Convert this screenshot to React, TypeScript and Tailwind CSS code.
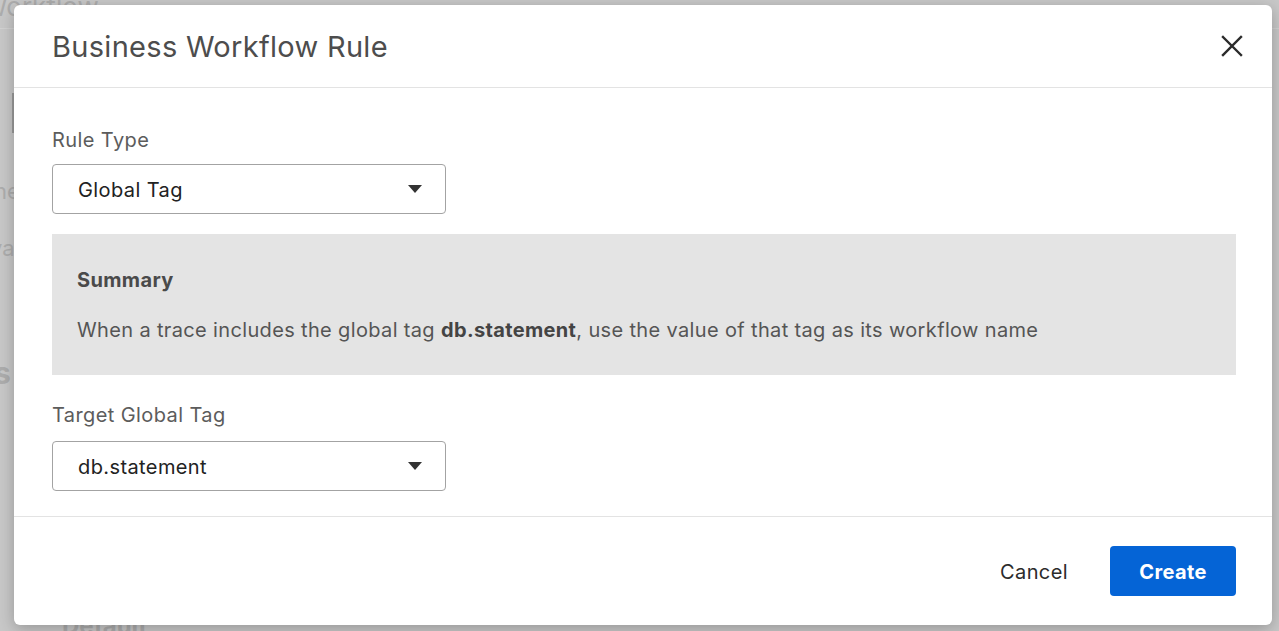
import React from 'react';

// 背景ページ（オーバーレイの下にうっすら見える部分）
function Backdrop() {
  return (
    <div className="h-full w-full bg-[#c8c8c8] text-[#adadad]">
      <div className="h-[29px] border-b border-[#d2d2d2] pl-0 pt-0 text-[26px] leading-[14px]">
        <span className="-ml-[18px]">Workflow</span>
      </div>
      <div className="ml-[12px] mt-[64px] h-[40px] w-[2px] bg-[#9a9a9a]" />
      <div className="mt-[42px] -ml-[6px] text-[22px]">ne</div>
      <div className="mt-[24px] -ml-[10px] text-[22px]">var</div>
      <div className="mt-[86px] -ml-[6px] text-[30px] font-bold">s</div>
      <div className="mt-[218px] ml-[62px] text-[24px] font-bold leading-none">Default</div>
    </div>
  );
}

function Caret() {
  return (
    <svg width="14" height="8" viewBox="0 0 14 8" className="shrink-0">
      <path d="M0 0 L14 0 L7 8 Z" fill="#333333" />
    </svg>
  );
}

function CloseIcon() {
  return (
    <svg width="22" height="22" viewBox="0 0 22 22">
      <path
        d="M2 2 L20 20 M20 2 L2 20"
        stroke="#2b2b2b"
        strokeWidth="2.4"
        strokeLinecap="square"
      />
    </svg>
  );
}

function SelectBox({ value }: { value: string }) {
  return (
    <button
      type="button"
      className="flex h-[50px] w-[394px] shrink-0 items-center justify-between rounded-[4px] border border-[#a3a3a3] bg-white pl-[25px] pr-[23px] text-left text-[20px] tracking-[0.4px] text-[#222]"
    >
      <span className="pt-[1px]">{value}</span>
      <Caret />
    </button>
  );
}

export default function App() {
  return (
    <div
      className="relative h-[631px] w-[1279px] overflow-hidden"
      style={{ fontFamily: 'Inter, "Noto Sans", sans-serif' }}
    >
      <Backdrop />

      {/* モーダル本体 */}
      <div className="absolute left-[14px] top-[5px] flex h-[620px] w-[1258px] flex-col rounded-[6px] bg-white shadow-[0_4px_16px_rgba(0,0,0,0.25)]">
        <div className="flex h-[83px] shrink-0 items-center justify-between border-b border-[#e3e3e3] pl-[38px] pr-[29px]">
          <h1 className="pt-[1px] text-[29px] font-normal tracking-[0.3px] text-[#4d4d4d]">
            Business Workflow Rule
          </h1>
          <button type="button" className="flex items-center justify-center">
            <CloseIcon />
          </button>
        </div>

        <div className="flex flex-1 flex-col pl-[38px] pr-[36px] pt-[39px] tracking-[0.4px]">
          <label className="mb-[11px] text-[20px] leading-[26px] text-[#5c5c5c]">Rule Type</label>
          <SelectBox value="Global Tag" />

          <div className="mt-[20px] h-[141px] shrink-0 bg-[#e4e4e4] pl-[25px] pt-[33px] tracking-[0.35px]">
            <div className="text-[20px] font-bold leading-[26px] text-[#4a4a4a]">Summary</div>
            <p className="mt-[24px] text-[20px] leading-[26px] text-[#555555]">
              When a trace includes the global tag{' '}
              <span className="font-bold text-[#444]">db.statement</span>, use the value of that tag as its
              workflow name
            </p>
          </div>

          <label className="mb-[13px] mt-[27px] text-[20px] leading-[26px] text-[#5c5c5c]">
            Target Global Tag
          </label>
          <SelectBox value="db.statement" />
        </div>

        <div className="flex h-[109px] shrink-0 items-center justify-end gap-[17px] border-t border-[#e3e3e3] pr-[36px] tracking-[0.4px]">
          <button type="button" className="h-[50px] rounded-[4px] px-[25px] pt-[1px] text-[20px] text-[#2b2b2b]">
            Cancel
          </button>
          <button
            type="button"
            className="h-[50px] w-[126px] rounded-[4px] bg-[#0564d6] pt-[1px] text-[20px] font-bold text-white"
          >
            Create
          </button>
        </div>
      </div>
    </div>
  );
}
